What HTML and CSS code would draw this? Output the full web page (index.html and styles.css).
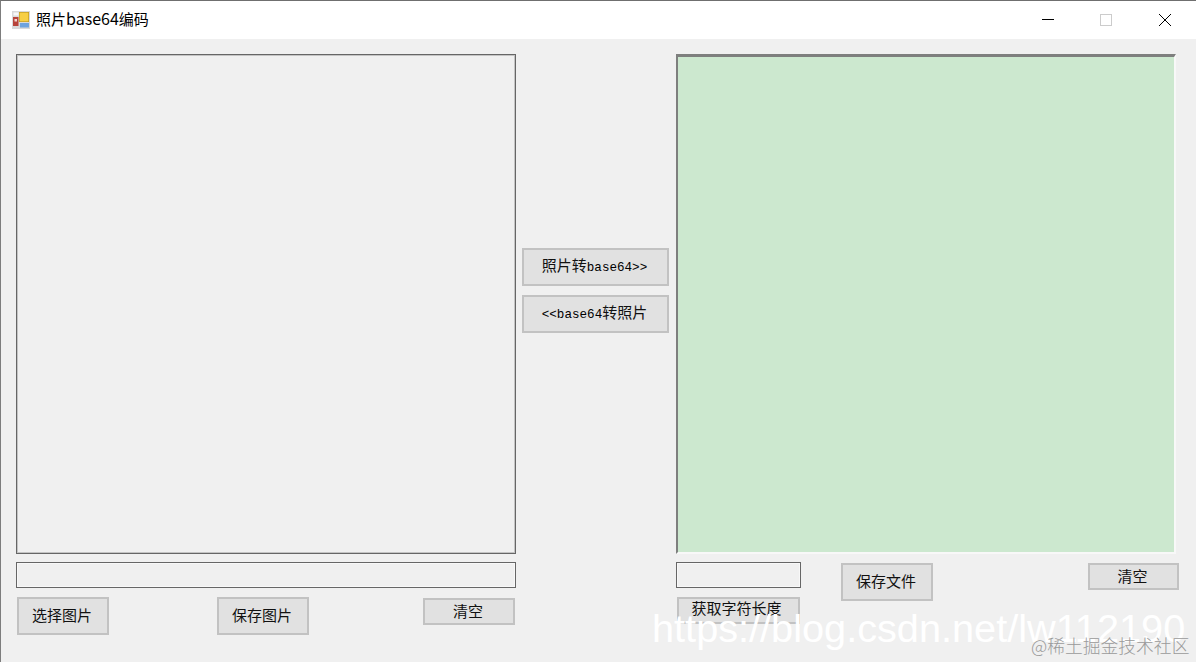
FILE: index.html
```html
<!DOCTYPE html>
<html lang="zh">
<head>
<meta charset="utf-8">
<title>照片base64编码</title>
<link rel="stylesheet" href="styles.css">
</head>
<body>
<div class="window">
  <header class="titlebar">
    <svg class="app-icon" width="18" height="18" viewBox="0 0 18 18">
      <rect x="0" y="0" width="18" height="18" fill="#d9d9d9"/>
      <rect x="1.5" y="1.5" width="5" height="3" fill="#f7f7f7"/>
      <rect x="1" y="6" width="5.5" height="9" fill="#b8433a"/>
      <rect x="2.5" y="8" width="2.5" height="2.5" fill="#f1d6d0"/>
      <rect x="7" y="1" width="10" height="10" fill="#f7cf45"/>
      <rect x="7.3" y="1.3" width="9.4" height="9.4" fill="none" stroke="#b9941f" stroke-width="0.6"/>
      <rect x="8" y="12" width="9" height="4.5" fill="#6ea3de"/>
    </svg>
    <span class="title">照片<span class="title-latin">base64</span>编码</span>
    <div class="controls">
      <svg class="ctl" width="46" height="39" viewBox="0 0 46 39"><path d="M17 19.5h12" stroke="#000" stroke-width="1" fill="none"/></svg>
      <svg class="ctl" width="46" height="39" viewBox="0 0 46 39"><rect x="17.5" y="14.5" width="11" height="11" stroke="#ccc" fill="none"/></svg>
      <svg class="ctl" width="46" height="39" viewBox="0 0 46 39"><path d="M17 14l12 12M29 14l-12 12" stroke="#000" stroke-width="1" fill="none"/></svg>
    </div>
  </header>
  <main class="content">
    <section class="col">
      <div class="picture"></div>
      <div class="field field-wide"></div>
      <div class="row row-left">
        <button class="btn btn-tall">选择图片</button>
        <button class="btn btn-tall save-pic">保存图片</button>
        <button class="btn btn-short clear-left">清空</button>
      </div>
    </section>
    <section class="col-mid">
      <button class="btn btn-tall btn-wide">照片转<span class="mono">base64&gt;&gt;</span></button>
      <button class="btn btn-tall btn-wide"><span class="mono">&lt;&lt;base64</span>转照片</button>
    </section>
    <section class="col">
      <div class="textbox"></div>
      <div class="row row-right">
        <div class="stack">
          <div class="field field-small"></div>
          <button class="btn btn-length">获取字符长度</button>
        </div>
        <button class="btn btn-tall save-file">保存文件</button>
        <button class="btn btn-short clear-right">清空</button>
      </div>
    </section>
  </main>
  <div class="mark-url">https://blog.csdn.net/lw112190</div>
  <div class="mark-juejin">@稀土掘金技术社区</div>
</div>
</body>
</html>
```
FILE: styles.css
```css
* { box-sizing: border-box; }
html, body { margin: 0; padding: 0; }
body {
  width: 1196px;
  height: 662px;
  overflow: hidden;
  background: #f0f0f0;
  font-family: "Noto Sans CJK SC", "Liberation Sans", sans-serif;
}
.window {
  position: relative;
  width: 1196px;
  height: 662px;
  overflow: hidden;
  background: #f0f0f0;
  border-top: 1px solid #6f6f6f;
  border-left: 1px solid #7d7d7d;
  display: flex;
  flex-direction: column;
}
.titlebar {
  height: 38px;
  flex: none;
  background: #fff;
  display: flex;
  align-items: center;
  padding-left: 11px;
}
.app-icon { flex: none; margin-right: 6px; }
.title { font-size: 15px; color: #000; line-height: 20px; margin-top: -4px; }
.title-latin { font-size: 16px; }
.controls { margin-left: auto; display: flex; margin-top: -1px; padding-right: 8px; }
.ctl { display: block; margin-left: 12px; }
.ctl:last-child { margin-left: 13px; }
.content {
  display: grid;
  grid-template-columns: 500px 148px 500px;
  column-gap: 6px;
  padding: 15px 0 0 15px;
  align-items: start;
}
.col { display: flex; flex-direction: column; }
.col-mid {
  display: flex;
  flex-direction: column;
  gap: 9px;
  padding-top: 194px;
}
.picture {
  height: 500px;
  border: 1px solid #666;
  box-shadow: inset 0 0 0 1px #c4c4c4;
  background: #f0f0f0;
}
.textbox {
  height: 500px;
  background: #cce8cf;
  border-style: solid;
  border-width: 3px 2px 2px 2px;
  border-color: #7e7f7e #f8f8f8 #f8f8f8 #7e7f7e;
}
.field {
  height: 26px;
  border: 1px solid #666;
  box-shadow: inset 0 0 0 1px #f8f8f8;
  background: #f0f0f0;
}
.field-wide { margin-top: 8px; }
.row { display: flex; align-items: flex-start; }
.row-left { margin-top: 9px; padding-left: 1px; }
.save-pic { margin-left: 108px; }
.clear-left { margin-left: 114px; margin-top: 1px; }
.row-right { margin-top: 8px; width: 503px; }
.stack { width: 125px; flex: none; display: flex; flex-direction: column; }
.field-small { width: 125px; }
.btn {
  display: block;
  padding: 0 2px 2px 0;
  background: #e1e1e1;
  border: 2px solid #c2c2c2;
  color: #111;
  font-family: "Noto Sans CJK SC", sans-serif;
  font-size: 15px;
  line-height: 20px;
  text-align: center;
  white-space: nowrap;
}
.btn-tall { width: 92px; height: 38px; flex: none; }
.btn-short { width: 92px; height: 27px; flex: none; }
.btn-wide { width: 147px; }
.mono {
  font-family: "Liberation Mono", monospace;
  font-size: 12.6px;
  color: #000;
}
.btn-length {
  width: 123px;
  height: 27px;
  margin: 9px 0 0 1px;
  line-height: 18px;
  padding: 0 4px 5px 0;
}
.save-file { margin: 1px 0 0 40px; }
.clear-right { margin: 1px 0 0 155px; width: 91px; }
.mark-url {
  position: absolute;
  left: 651px;
  top: 602px;
  font-family: "Liberation Sans", sans-serif;
  font-size: 39.7px;
  line-height: 50px;
  color: #fff;
  white-space: nowrap;
}
.mark-juejin {
  position: absolute;
  left: 1030px;
  top: 632px;
  font-family: "Noto Sans CJK SC", sans-serif;
  font-size: 17.8px;
  font-weight: 300;
  line-height: 24px;
  color: #9a9a9a;
  white-space: nowrap;
}
```
